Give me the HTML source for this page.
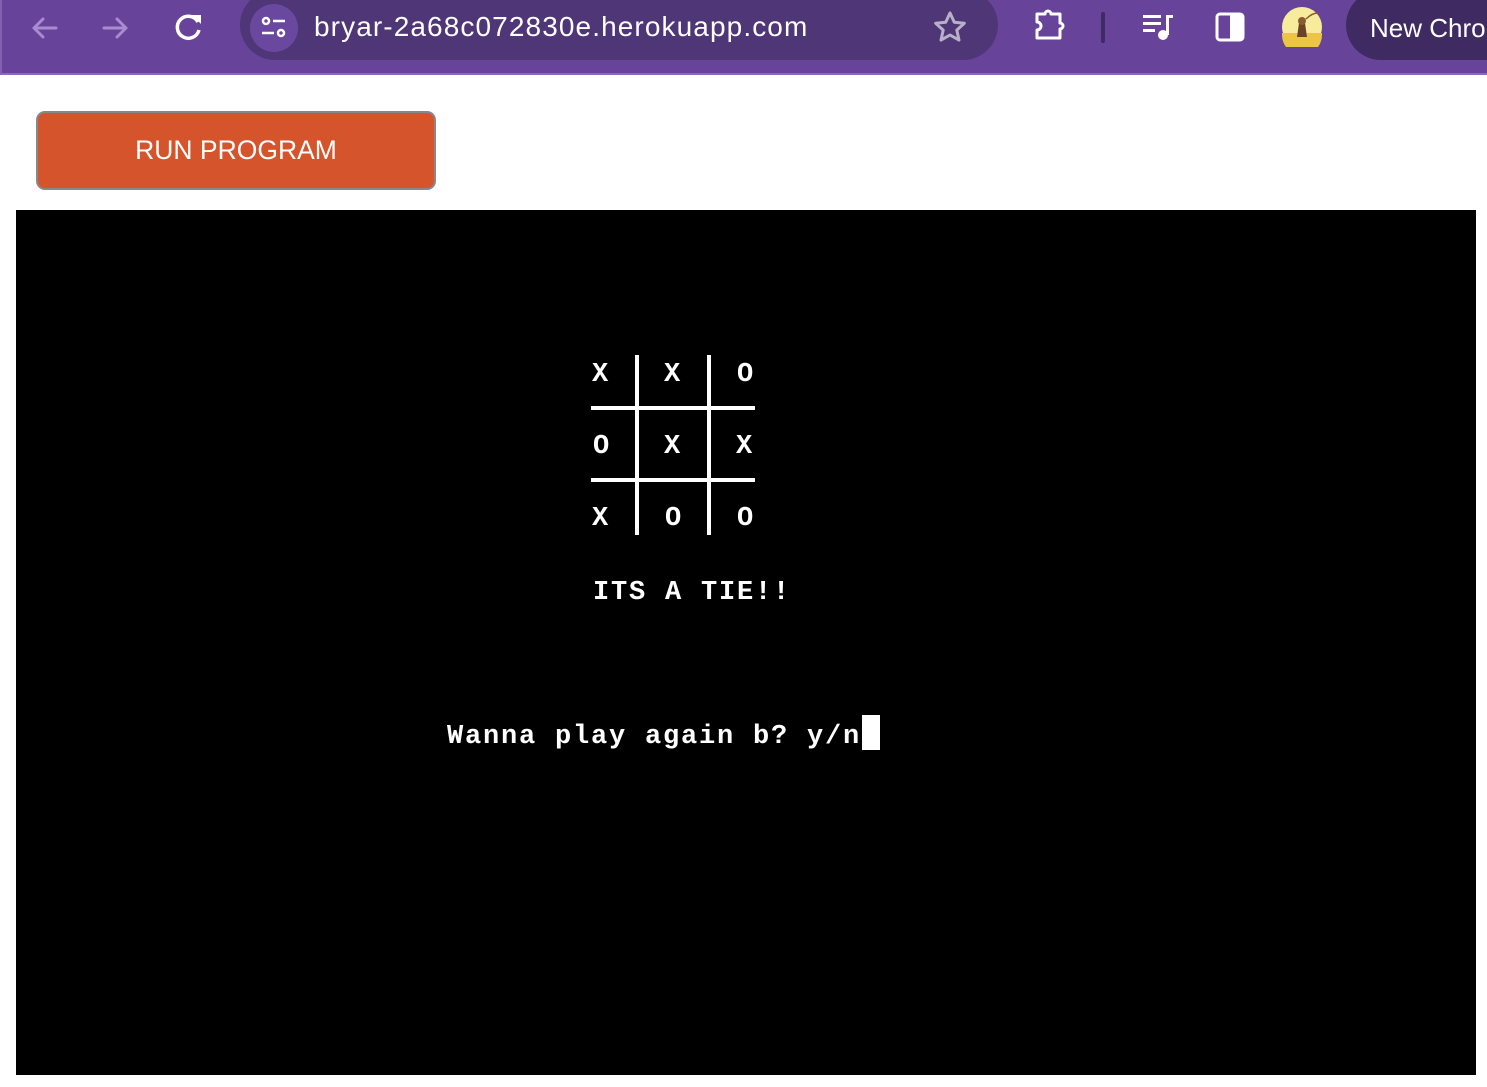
<!DOCTYPE html>
<html><head><meta charset="utf-8"><style>
*{margin:0;padding:0;box-sizing:border-box}
body{width:1487px;height:1087px;background:#fff;position:relative;overflow:hidden;font-family:"Liberation Sans",sans-serif}
.bar{position:absolute;left:0;top:0;width:1487px;height:75px;background:#674399;border-bottom:2px solid #8e68b9;border-left:2px solid #8461b0}
.omni{position:absolute;left:240px;top:-10px;width:758px;height:70px;background:#4f3677;border-radius:35px}
.tune{position:absolute;left:250px;top:4px;width:48px;height:48px;border-radius:50%;background:#6a48a0}
.url{position:absolute;left:314px;top:11px;color:#fff;font-size:28px;letter-spacing:1.1px}
.pill{position:absolute;left:1346px;top:-10px;width:200px;height:70px;border-radius:35px;background:#3f2a62}
.pill span{position:absolute;left:24px;top:23px;color:#fff;font-size:26px}
.btn{position:absolute;left:36px;top:111px;width:400px;height:79px;background:#d6542b;border:2px solid #888;border-radius:9px;color:#fff;font-size:26.5px;text-align:center;line-height:75px}
.term{position:absolute;left:16px;top:210px;width:1460px;height:865px;background:#000}
.t{position:absolute;color:#fff;font-family:"Liberation Mono",monospace;font-weight:bold;font-size:27px;letter-spacing:1.8px;line-height:36px;white-space:pre}
.l{position:absolute;background:#fff}
</style></head><body>
<div class="bar"></div>
<svg style="position:absolute;left:28px;top:12px" width="110" height="32" viewBox="0 0 110 32"><g stroke="#a98bd0" stroke-width="3" fill="none" stroke-linecap="round" stroke-linejoin="round"><path d="M28 16H6M15 7l-9 9 9 9"/><path d="M76 16h22M89 7l9 9-9 9"/></g></svg>
<svg style="position:absolute;left:172px;top:10px" width="34" height="34" viewBox="0 0 34 34"><path d="M26 12A11 11 0 1 0 27 20" stroke="#fff" stroke-width="3.5" fill="none"/><path d="M20 5h9v9z" fill="#fff"/></svg>
<div class="omni"></div>
<div class="tune"></div>
<svg style="position:absolute;left:258px;top:12px" width="32" height="32" viewBox="0 0 32 32"><g stroke="#fff" stroke-width="2.5" fill="none"><circle cx="8" cy="9" r="3"/><path d="M15 9h12M4 21h12"/><circle cx="23" cy="21" r="3"/></g></svg>
<div class="url">bryar-2a68c072830e.herokuapp.com</div>
<svg style="position:absolute;left:932px;top:10px" width="36" height="34" viewBox="0 0 36 34"><path d="M18 3l4.3 9.3 10 1-7.5 6.8 2.2 10L18 25l-9 5.1 2.2-10-7.5-6.8 10-1z" stroke="#b8b0c8" stroke-width="3" fill="none" stroke-linejoin="round"/></svg>
<svg style="position:absolute;left:1032px;top:8px" width="40" height="36" viewBox="0 0 40 36"><path d="M5 6h8a3 3 0 0 1 6 0h9v9a3 3 0 0 1 0 6v9H5v-8a3 3 0 0 0 0-8z" stroke="#fff" stroke-width="3" fill="none" stroke-linejoin="round"/></svg>
<div style="position:absolute;left:1101px;top:12px;width:4px;height:31px;background:#3e2b64;border-radius:2px"></div>
<svg style="position:absolute;left:1140px;top:12px" width="36" height="32" viewBox="0 0 36 32"><g fill="#fff"><rect x="3" y="3" width="18" height="3"/><rect x="3" y="10" width="18" height="3"/><rect x="3" y="17" width="12" height="3"/><circle cx="23" cy="23" r="5"/><rect x="26" y="3" width="3" height="20"/><rect x="26" y="3" width="7" height="3"/></g></svg>
<svg style="position:absolute;left:1212px;top:10px" width="36" height="34" viewBox="0 0 36 34"><rect x="5" y="4" width="26" height="26" rx="3" stroke="#fff" stroke-width="3" fill="none"/><rect x="18" y="4" width="13" height="26" fill="#fff"/></svg>
<svg style="position:absolute;left:1282px;top:7px" width="40" height="40" viewBox="0 0 40 40"><circle cx="20" cy="20" r="20" fill="#f7ec9c"/><path d="M0 26h40v2A20 20 0 0 1 0 28z" fill="#ecc545"/><path d="M15 30l2-14h6l2 14z" fill="#6b4226"/><circle cx="20" cy="14" r="4" fill="#8a5a33"/><path d="M24 12q6-6 12-6" stroke="#8a5a33" stroke-width="1.5" fill="none"/></svg>
<div class="pill"><span>New Chrome</span></div>
<div class="btn">RUN PROGRAM</div>
<div class="term"></div>
<div class="l" style="left:635px;top:355px;width:4px;height:180px"></div>
<div class="l" style="left:707px;top:355px;width:4px;height:180px"></div>
<div class="l" style="left:591px;top:406px;width:164px;height:4px"></div>
<div class="l" style="left:591px;top:478px;width:164px;height:4px"></div>
<div class="t" style="left:592px;top:357px">X</div>
<div class="t" style="left:664px;top:357px">X</div>
<div class="t" style="left:737px;top:357px">O</div>
<div class="t" style="left:593px;top:429px">O</div>
<div class="t" style="left:664px;top:429px">X</div>
<div class="t" style="left:736px;top:429px">X</div>
<div class="t" style="left:592px;top:501px">X</div>
<div class="t" style="left:665px;top:501px">O</div>
<div class="t" style="left:737px;top:501px">O</div>
<div class="t" style="left:593px;top:575px">ITS A TIE!!</div>
<div class="t" style="left:447px;top:719px">Wanna play again b? y/n</div>
<div class="l" style="left:862px;top:715px;width:18px;height:35px"></div>
</body></html>
